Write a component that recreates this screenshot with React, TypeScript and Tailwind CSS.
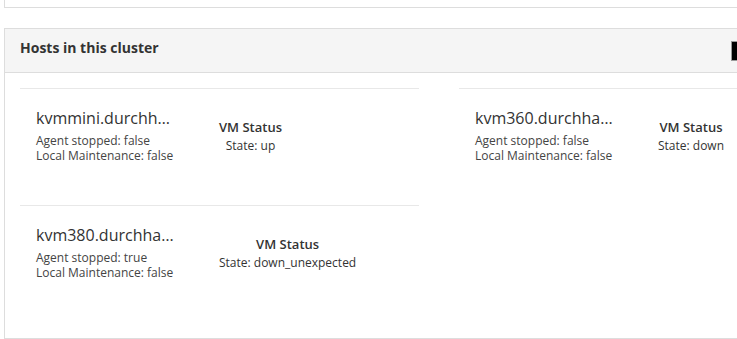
const hosts = [
  { name: "kvmmini.durchhausen.local", agentStopped: "false", maintenance: "false", state: "up" },
  { name: "kvm360.durchhausen.local", agentStopped: "false", maintenance: "false", state: "down" },
  { name: "kvm380.durchhausen.local", agentStopped: "true", maintenance: "false", state: "down_unexpected" },
];

const HostCard = ({ host }: { host: (typeof hosts)[number] }) => (
  <div className="h-[117px] border-t border-[#e8e8e8] flex pl-4 pt-[18px]">
    <div className="w-[183px] shrink-0">
      <div className="w-[142px] truncate text-[16px] leading-[22px] text-[#333]">{host.name}</div>
      <div className="mt-[4px] text-[12px] leading-[15px] text-[#444]">
        <div>Agent stopped: {host.agentStopped}</div>
        <div>Local Maintenance: {host.maintenance}</div>
      </div>
    </div>
    <div className="pt-[12px] text-center text-[#333]">
      <div className="text-[13px] leading-[16px] font-semibold">VM Status</div>
      <div className="mt-[3px] text-[12px] leading-[16px]">State: {host.state}</div>
    </div>
  </div>
);

export default function App() {
  return (
    <div className="w-[737px] h-[339px] overflow-hidden bg-white" style={{ fontFamily: '"Open Sans", "Liberation Sans", sans-serif' }}>
      <div className="ml-[4px] w-[900px] h-[8px] border-l border-b border-[#ddd]" />
      <div className="ml-[4px] mt-[20px] w-[900px] border border-[#ddd]">
        <div className="h-[44px] bg-[#f5f5f5] border-b border-[#ddd] flex items-center">
          <div className="w-[726px] pl-[15px] pb-[6px] text-[14px] leading-[20px] font-bold text-[#333]">Hosts in this cluster</div>
          <div className="w-[24px] h-[20px] bg-black border border-[#999]" />
        </div>
        <div className="p-[15px] pb-[16px] grid grid-cols-[399px_399px] gap-x-[40px]">
          {hosts.map((h) => (
            <HostCard key={h.name} host={h} />
          ))}
        </div>
      </div>
    </div>
  );
}
